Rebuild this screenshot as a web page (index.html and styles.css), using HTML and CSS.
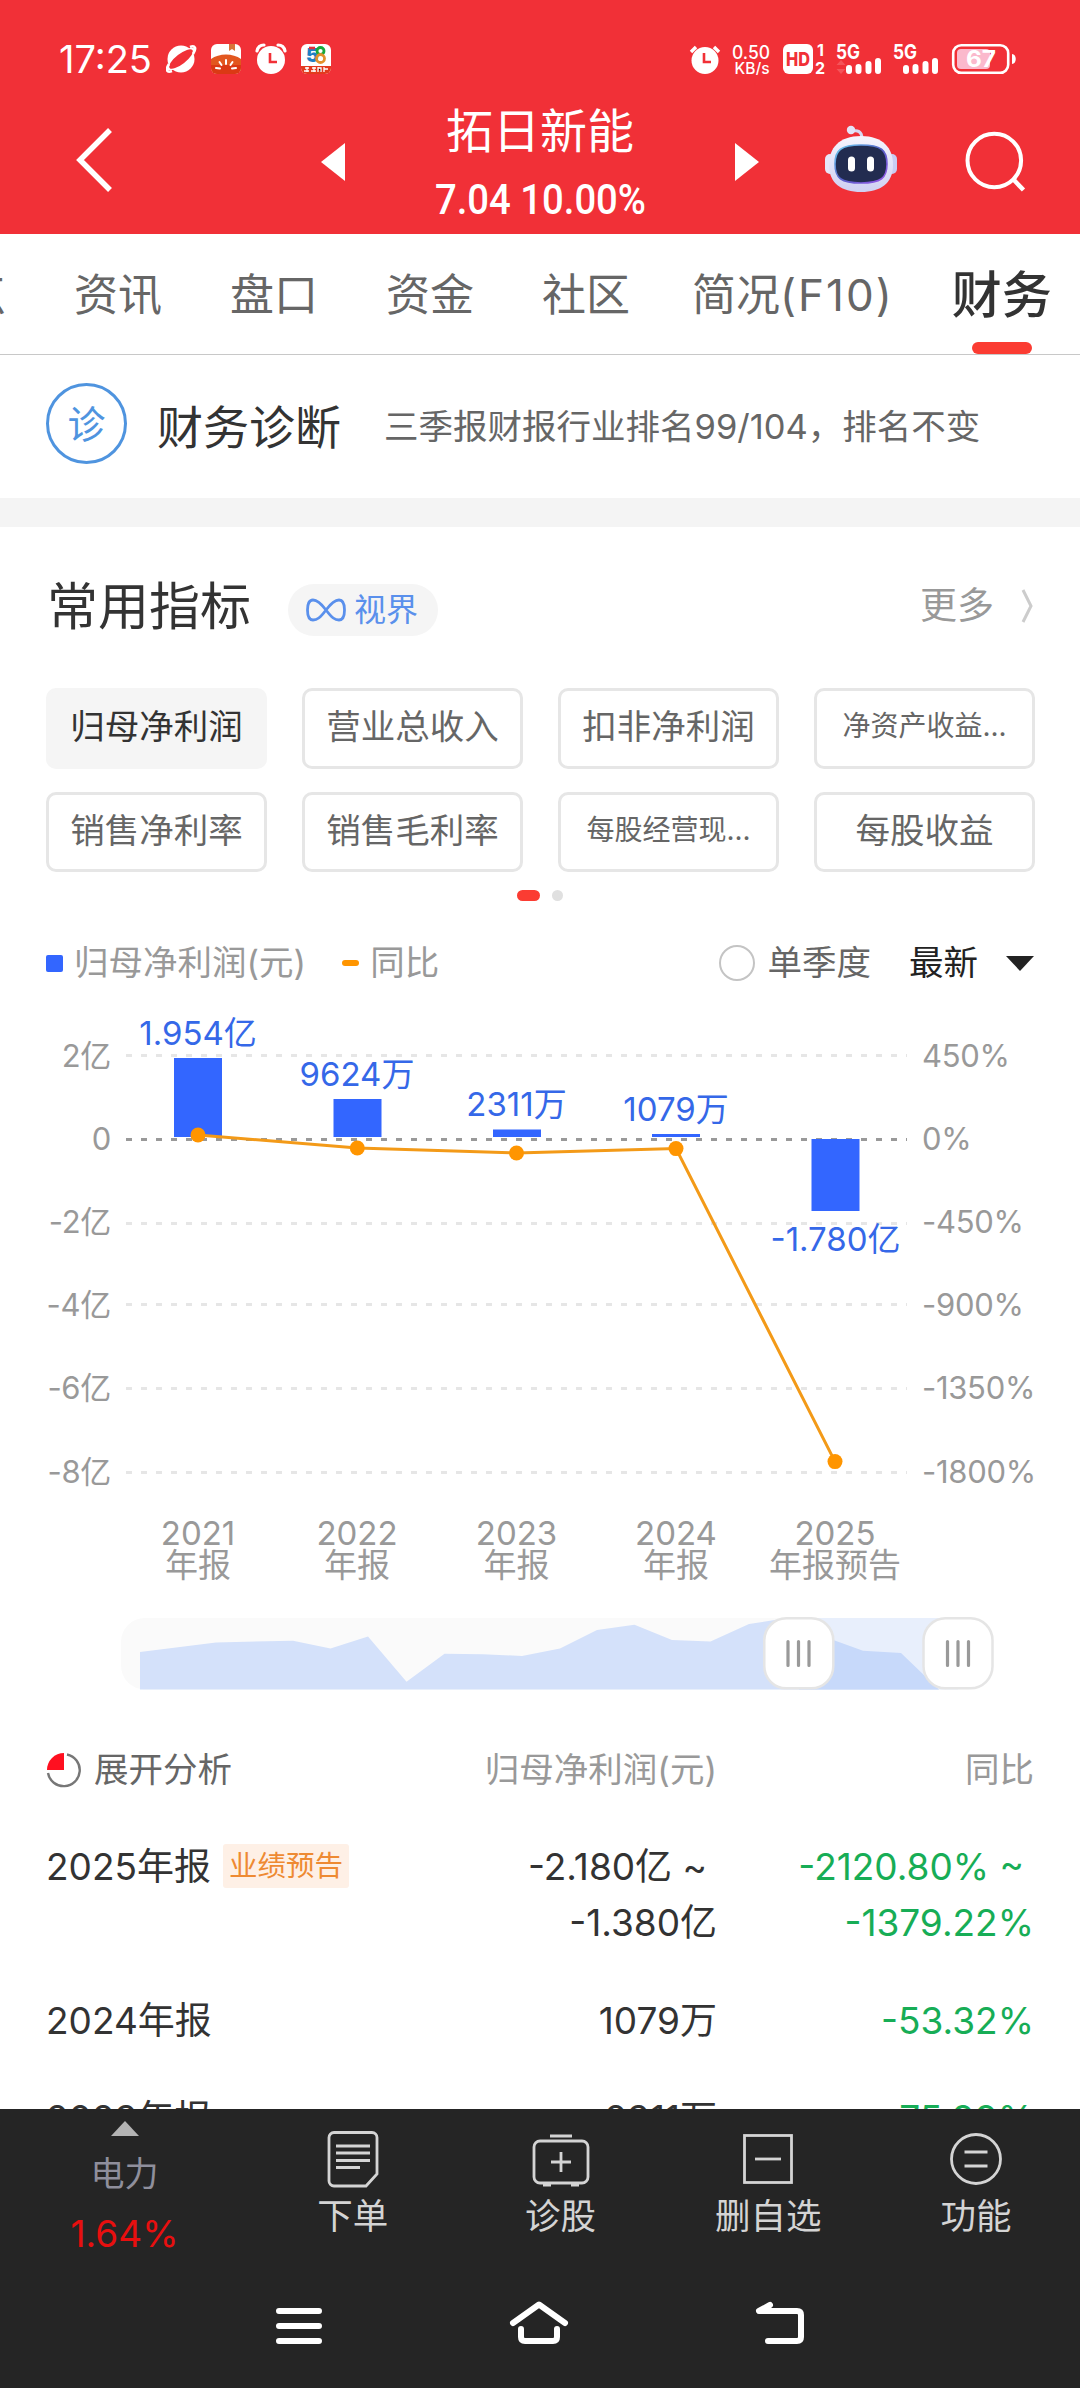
FILE: index.html
```html
<!DOCTYPE html>
<html lang="zh-CN">
<head>
<meta charset="utf-8">
<title>拓日新能 - 财务</title>
<link rel="stylesheet" href="styles.css">
</head>
<body>
<div class="screen">
  <header class="header">
    <div class="status">
      <div class="status-left">
        <span class="clock">17:25</span>
        <svg class="st-icon" width="166" height="32" viewBox="0 0 166 32">
          <circle cx="15" cy="16" r="13.500" fill="#fff"/>
          <ellipse cx="15" cy="16" rx="17" ry="5.500" transform="rotate(-38 15 16)" fill="#fff"/>
          <ellipse cx="15" cy="16" rx="14.500" ry="5" transform="rotate(-38 15 16)" fill="#f13037"/>
          <path d="M24 4c5-2 7 1 3 7M6 28c-5 2-7-1-3-7" fill="none" stroke="#fff" stroke-width="2.600"/>
          <rect x="45" y="1" width="30" height="30" rx="6" fill="#fff"/>
          <path d="M45 16c8-6 22-6 30 0v9a6 6 0 0 1-6 6H51a6 6 0 0 1-6-6z" fill="#e2571f"/>
          <path d="M45 22h30v3a6 6 0 0 1-6 6H51a6 6 0 0 1-6-6z" fill="#d92c10" opacity=".7"/>
          <path d="M63 1h6v7l-3-2-3 2z" fill="#d9743a"/>
          <path d="M60 17v4M53.500 19l2 3M66.500 19l-2 3M50 25l4 .5M70 25l-4 .5" stroke="#fff" stroke-width="2" stroke-linecap="round"/>
          <g transform="translate(90 1)">
            <circle cx="15" cy="16" r="14" fill="#fff"/>
            <path d="M1 7C2 2 5 1 8 1M29 7C28 2 25 1 22 1" fill="none" stroke="#fff" stroke-width="3.200" stroke-linecap="round"/>
            <path d="M14 9v9h7" fill="none" stroke="#f13037" stroke-width="2.600"/>
          </g>
          <rect x="135" y="1" width="30" height="30" rx="6" fill="#fff"/>
          <path d="M135 23h30v2a6 6 0 0 1-6 6h-18a6 6 0 0 1-6-6z" fill="#e23a1e"/>
          <text x="140" y="19" class="s58" fill="#1f7fc4">5</text>
          <path d="M143 5h6" stroke="#e0303a" stroke-width="2.600"/>
          <circle cx="154.500" cy="8" r="3.500" fill="none" stroke="#17a83b" stroke-width="2.800"/>
          <circle cx="154.500" cy="15.500" r="4" fill="none" stroke="#e2912c" stroke-width="2.800"/>
          <path d="M139 25h4M138 28h5M141 24v5M146 25h4M145 28h5M148 24v5M152 24v5M152 25h3v4M158 24v5M158 26h4" stroke="#fff" stroke-width="1.300"/>
        </svg>
      </div>
      <svg class="st-right" width="330" height="32" viewBox="689 43 330 32">
        <circle cx="705" cy="60.500" r="13.500" fill="#fff"/>
        <path d="M691 52l5-5M719 52l-5-5" stroke="#fff" stroke-width="3.400"/>
        <path d="M704 53v9h7" fill="none" stroke="#f13037" stroke-width="2.600"/>
        <text x="732" y="58.500" class="net" textLength="38" lengthAdjust="spacingAndGlyphs">0.50</text>
        <text x="734.500" y="74" class="net2" textLength="35" lengthAdjust="spacingAndGlyphs">KB/s</text>
        <rect x="783" y="44" width="30" height="30" rx="6" fill="#fff"/>
        <text x="786" y="66" class="hd" textLength="24" lengthAdjust="spacingAndGlyphs">HD</text>
        <text x="817" y="56" class="sim">1</text>
        <text x="815" y="74" class="sim">2</text>
        <text x="836" y="59" class="g5" textLength="24" lengthAdjust="spacingAndGlyphs">5G</text>
        <path d="M849 68v3M858.500 67v4M868.500 64v7M878 61v10" stroke="#fff" stroke-width="6" stroke-linecap="round"/>
        <path d="M841 60l4.500 5h-9zM841 74l4.500-5h-9z" fill="#f4545a"/>
        <text x="893" y="59" class="g5" textLength="24" lengthAdjust="spacingAndGlyphs">5G</text>
        <path d="M906 68v3M915.500 67v4M925.500 64v7M935 61v10" stroke="#fff" stroke-width="6" stroke-linecap="round"/>
        <rect x="953.200" y="45.200" width="55" height="27.600" rx="8" fill="none" stroke="#fff" stroke-width="2.600"/>
        <rect x="957" y="49" width="33" height="20" rx="4" fill="#fbb9cc"/>
        <text x="966" y="67" class="batt" textLength="30" lengthAdjust="spacingAndGlyphs">67</text>
        <path d="M1012 54c5 0 5 10 0 10z" fill="#fff"/>
      </svg>
    </div>
    <div class="nav">
      <svg class="back" width="40" height="68" viewBox="0 0 40 68"><path d="M36 4L6 34l30 30" fill="none" stroke="#fff" stroke-width="5.500"/></svg>
      <svg class="prev" width="24" height="38" viewBox="0 0 24 38"><path d="M24 0v38L0 19z" fill="#fff"/></svg>
      <div class="stock">
        <h1 class="stock-name">拓日新能</h1>
        <svg class="stock-quote" width="212" height="36" viewBox="0 0 212 36"><text x="0" y="33" class="quote" textLength="211" lengthAdjust="spacingAndGlyphs">7.04 10.00%</text></svg>
      </div>
      <svg class="next" width="24" height="38" viewBox="0 0 24 38"><path d="M0 0v38l24-19z" fill="#fff"/></svg>
      <svg class="robot" width="74" height="70" viewBox="824 124 74 70">
        <defs>
          <linearGradient id="shell" x1="0" y1="0" x2="0" y2="1"><stop offset="0" stop-color="#f6f5fd"/><stop offset="1" stop-color="#cfd0f2"/></linearGradient>
          <linearGradient id="rim" x1="0" y1="0" x2="1" y2="1"><stop offset="0" stop-color="#6fd3f2"/><stop offset=".5" stop-color="#5560c8"/><stop offset="1" stop-color="#9a55e8"/></linearGradient>
        </defs>
        <path d="M862 139c0-8-5-9-9-8" fill="none" stroke="#d8d8f2" stroke-width="3"/>
        <circle cx="851" cy="130" r="4.200" fill="#e3e3f7"/>
        <rect x="825" y="154" width="10" height="20" rx="5" fill="#e6e6f8"/>
        <rect x="887" y="154" width="10" height="20" rx="5" fill="#c9ccf2"/>
        <path d="M861 136c22 0 32 12 32 29 0 18-12 27-32 27s-32-9-32-27c0-17 10-29 32-29z" fill="url(#shell)"/>
        <path d="M861 145c20 0 26 5 26 19s-6 19-26 19-26-5-26-19 6-19 26-19z" fill="#222c50" stroke="url(#rim)" stroke-width="1.600"/>
        <rect x="848" y="156.500" width="7" height="15" rx="3.500" fill="#fff"/>
        <rect x="867" y="156.500" width="7" height="15" rx="3.500" fill="#fff"/>
      </svg>
      <svg class="search" width="62" height="62" viewBox="964 130 62 62"><circle cx="994.300" cy="160.500" r="26.800" fill="none" stroke="#fff" stroke-width="4"/><path d="M1013 179l10.500 11" stroke="#fff" stroke-width="4.500"/></svg>
    </div>
  </header>

  <nav class="tabs">
    <span class="tab tab-cut">点</span>
    <span class="tab">资讯</span>
    <span class="tab">盘口</span>
    <span class="tab">资金</span>
    <span class="tab">社区</span>
    <span class="tab tab-f10">简况<span class="wide">(F10)</span></span>
    <span class="tab active">财务</span>
  </nav>

  <main class="content">
    <section class="diagnosis">
      <span class="diag-badge">诊</span>
      <span class="diag-title">财务诊断</span>
      <span class="diag-desc">三季报财报行业排名99/104，排名不变</span>
    </section>
    <section class="metrics">
      <div class="metrics-head">
        <h2 class="metrics-title">常用指标</h2>
        <span class="vision">
          <svg width="40" height="24" viewBox="0 0 40 24"><path d="M20 12C14 4 10 2 7 2 3 2 1.500 6 1.500 12S3 22 7 22s7-2 13-10S30 2 33 2c4 0 5.500 4 5.500 10S37 22 33 22s-7-2-13-10z" fill="none" stroke="#5a90ec" stroke-width="2.800"/></svg>
          <span>视界</span>
        </span>
        <span class="more"><span>更多</span><svg width="14" height="38" viewBox="0 0 14 38"><path d="M3 3l8 16-8 16" fill="none" stroke="#ccc" stroke-width="3"/></svg></span>
      </div>
      <div class="chips">
        <span class="chip on">归母净利润</span>
        <span class="chip">营业总收入</span>
        <span class="chip">扣非净利润</span>
        <span class="chip small">净资产收益...</span>
        <span class="chip">销售净利率</span>
        <span class="chip">销售毛利率</span>
        <span class="chip small">每股经营现...</span>
        <span class="chip">每股收益</span>
      </div>
      <div class="pager"><i class="dot current"></i><i class="dot"></i></div>

      <div class="legend">
        <i class="key-bar"></i><span>归母净利润(元)</span>
        <i class="key-line"></i><span>同比</span>
        <i class="radio"></i><span class="quarter">单季度</span>
        <span class="latest">最新</span>
        <svg width="28" height="15" viewBox="0 0 28 15"><path d="M0 0h28L14 15z" fill="#222"/></svg>
      </div>

      <svg class="chart" width="1080" height="607" viewBox="0 993 1080 607">
        <g class="grid">
          <path d="M126 1055.500h781M126 1223.500h781M126 1304.500h781M126 1388.500h781M126 1472.500h781"/>
          <path class="zero" d="M126 1139.500h781"/>
        </g>
        <g class="axis axis-left">
          <text x="111" y="1067">2亿</text><text x="111" y="1150">0</text><text x="111" y="1233">-2亿</text>
          <text x="111" y="1316">-4亿</text><text x="111" y="1399">-6亿</text><text x="111" y="1483">-8亿</text>
        </g>
        <g class="axis">
          <text x="922" y="1067">450%</text><text x="922" y="1150">0%</text><text x="922" y="1233">-450%</text>
          <text x="922" y="1316">-900%</text><text x="922" y="1399">-1350%</text><text x="922" y="1483">-1800%</text>
        </g>
        <g fill="#3366ff">
          <rect x="174" y="1058" width="48" height="79"/><rect x="333.500" y="1099" width="48" height="38"/>
          <rect x="493" y="1129.500" width="48" height="7.500"/><rect x="652" y="1134" width="48" height="3"/>
          <rect x="811.500" y="1139" width="48" height="72"/>
        </g>
        <path d="M198 1135L357.300 1148L516.500 1153L676 1148.600L835 1461.600" fill="none" stroke="#f39a18" stroke-width="3"/>
        <g fill="#ff9500">
          <circle cx="198" cy="1135" r="7.500"/><circle cx="357.300" cy="1148" r="7.500"/><circle cx="516.500" cy="1153" r="7.500"/><circle cx="676" cy="1148.600" r="7.500"/><circle cx="835" cy="1461.600" r="7.500"/>
        </g>
        <g class="value">
          <text x="198" y="1045">1.954亿</text><text x="357" y="1086">9624万</text>
          <text x="516.500" y="1116">2311万</text><text x="676" y="1121">1079万</text>
          <text x="835.500" y="1250.500">-1.780亿</text>
        </g>
        <g class="period">
          <text x="198" y="1545">2021</text><text x="198" y="1577">年报</text>
          <text x="357" y="1545">2022</text><text x="357" y="1577">年报</text>
          <text x="516.500" y="1545">2023</text><text x="516.500" y="1577">年报</text>
          <text x="676" y="1545">2024</text><text x="676" y="1577">年报</text>
          <text x="835" y="1545">2025</text><text x="835" y="1577">年报预告</text>
        </g>
      </svg>

      <svg class="range" width="1080" height="140" viewBox="0 1600 1080 140">
        <defs>
          <clipPath id="win"><rect x="799" y="1618" width="159" height="72"/></clipPath>
          <path id="trend" d="M140 1689.500V1652L216 1642.400L293 1640.800L330.500 1648.500L368 1636.600L406.500 1681.800L444.500 1653.800L483 1654.200L522 1656L560 1648.500L597 1630L634.500 1624.800L672 1640L710.500 1641.600L749 1624L787 1618L825 1637L863 1650.800L901 1653L939 1689.500z"/>
        </defs>
        <rect x="121" y="1618" width="870" height="71.500" rx="24" fill="#fafafa"/>
        <use href="#trend" fill="#d4e1fa"/>
        <g clip-path="url(#win)">
          <rect x="799" y="1618" width="159" height="71.500" fill="#e8effc"/>
          <use href="#trend" fill="#c7d9fa"/>
        </g>
        <g fill="#fff" stroke="#e5e5e5" stroke-width="2.500">
          <rect x="764.300" y="1618.300" width="69" height="70" rx="22"/><rect x="923.500" y="1618.300" width="69" height="70" rx="22"/>
        </g>
        <path d="M788 1641.500v24M798.500 1641.500v24M809 1641.500v24M947.500 1641.500v24M958 1641.500v24M968.500 1641.500v24" stroke="#999" stroke-width="3.200" stroke-linecap="round"/>
      </svg>

      <div class="row thead">
        <div class="c1"><svg width="36" height="36" viewBox="0 0 36 36"><path d="M18 1v17H1A17 17 0 0 1 18 1z" fill="#ff1020"/><path d="M21 2.500A16 16 0 1 1 2 21" fill="none" stroke="#777" stroke-width="2.400"/></svg><span>展开分析</span></div>
        <div class="c2">归母净利润(元)</div>
        <div class="c3">同比</div>
      </div>
      <div class="tbody">
        <div class="row">
          <div class="c1"><span>2025年报</span><span class="tag">业绩预告</span></div>
          <div class="c2"><div class="range-from">-2.180亿 ~</div><div>-1.380亿</div></div>
          <div class="c3 down"><div class="range-from">-2120.80% ~</div><div>-1379.22%</div></div>
        </div>
        <div class="row"><div class="c1">2024年报</div><div class="c2">1079万</div><div class="c3 down">-53.32%</div></div>
        <div class="row"><div class="c1">2023年报</div><div class="c2">2311万</div><div class="c3 down">-75.99%</div></div>
      </div>
    </section>
  </main>

  <footer class="bottom">
    <div class="toolbar">
      <div class="sector">
        <svg width="28" height="15" viewBox="0 0 28 15"><path d="M14 0l14 15H0z" fill="#b3b3b3"/></svg>
        <span class="sector-name">电力</span>
        <span class="sector-rate">1.64%</span>
      </div>
      <div class="tool">
        <svg width="60" height="60" viewBox="0 0 60 60"><g fill="none" stroke="#d4d4d4" stroke-width="2.800"><path d="M11 3.500h38a5 5 0 0 1 5 5V45L43 57H11a5 5 0 0 1-5-5V8.500a5 5 0 0 1 5-5z"/><path d="M13 17h34M13 24h34M13 31.500h34M13 38.500h24"/></g></svg>
        <span>下单</span>
      </div>
      <div class="tool">
        <svg width="60" height="60" viewBox="0 0 60 60"><g fill="none" stroke="#d4d4d4" stroke-width="2.800"><rect x="3" y="12" width="54" height="42" rx="6"/><path d="M19 7h22M12 56h8M40 56h8M20 33h20M30 23v20"/></g></svg>
        <span>诊股</span>
      </div>
      <div class="tool">
        <svg width="60" height="60" viewBox="0 0 60 60"><g fill="none" stroke="#d4d4d4" stroke-width="2.800"><rect x="6.500" y="6.500" width="47" height="47"/><path d="M17 30h26"/></g></svg>
        <span>删自选</span>
      </div>
      <div class="tool">
        <svg width="60" height="60" viewBox="0 0 60 60"><g fill="none" stroke="#d4d4d4" stroke-width="2.800"><circle cx="30" cy="30" r="24.500"/><path d="M18.500 23h23M18.500 37h23"/></g></svg>
        <span>功能</span>
      </div>
    </div>
    <div class="sysnav">
      <svg width="50" height="46" viewBox="275 2300 50 46"><path d="M280 2310h40M280 2325h40M280 2340h40" stroke="#fff" stroke-width="6" stroke-linecap="round"/></svg>
      <svg width="60" height="46" viewBox="510 2300 60 46"><path d="M514 2322l26-18.500 26 18.500M522 2328v8q0 4 4 4h28q4 0 4-4v-8" fill="none" stroke="#fff" stroke-width="6" stroke-linecap="round" stroke-linejoin="round"/></svg>
      <svg width="52" height="46" viewBox="754 2300 52 46"><path d="M770 2304l-11 6h38q4 0 4 4v22q0 4-4 4h-29" fill="none" stroke="#fff" stroke-width="6" stroke-linecap="round" stroke-linejoin="round"/></svg>
    </div>
  </footer>
</div>
</body>
</html>
```
FILE: styles.css
```css
* { box-sizing: border-box; margin: 0; padding: 0; }
body { width: 1080px; height: 2388px; background: #fff; font-family: Inter, "Noto Sans CJK SC", sans-serif; color: #333; }
h1, h2 { font-weight: 400; }
i { display: block; flex: none; }
svg { display: block; flex: none; }
.screen { display: flex; flex-direction: column; height: 2388px; overflow: hidden; }

/* status bar and title bar */
.header { height: 234px; background: #f13037; color: #fff; flex: none; }
.status { display: flex; justify-content: space-between; height: 90px; padding: 43px 61px 0 59px; }
.status-left { display: flex; align-items: flex-start; }
.clock { font-size: 38px; line-height: 32px; width: 107px; letter-spacing: 0; }
.s58 { font: 900 19px Inter; }
.net { font: 500 18px Inter; fill: #fff; }
.net2 { font: 500 16px Inter; fill: #fff; }
.hd { font: 800 19px Inter; fill: #f13037; }
.sim { font: 700 16px Inter; fill: #fff; }
.g5 { font: 700 20px Inter; fill: #fff; }
.batt { font: 700 23px Inter; fill: #fff; }
.nav { display: flex; height: 144px; align-items: flex-start; }
.back { margin: 36px 0 0 74px; }
.prev { margin: 53px 0 0 207px; }
.stock { width: 390px; display: flex; flex-direction: column; align-items: center; padding-top: 16px; }
.stock-name { font-size: 47px; line-height: 50px; }
.stock-quote { margin-top: 25px; margin-left: 2px; }
.quote { font: 500 42px Roboto; fill: #fff; }
.next { margin-top: 53px; }
.robot { margin: 34px 0 0 65px; }
.search { margin: 40px 0 0 66px; }

/* tabs */
.tabs { display: flex; flex: none; height: 121px; border-bottom: 1px solid #c8c8c8; overflow: hidden; font-size: 44px; line-height: 123px; color: #666; white-space: nowrap; }
.tab { margin-right: 68px; flex: none; position: relative; }
.tab-cut { margin-left: -38px; }
.tab-f10 { margin: 0 58px 0 -6px; }
.wide { letter-spacing: 2px; }
.tab.active { font-size: 50px; font-weight: 500; color: #333; margin: 0; }
.tab.active::after { content: ""; position: absolute; left: 20px; bottom: 0; width: 60px; height: 12px; border-radius: 6px; background: #fb3c32; }

.content { flex: 1; min-height: 0; overflow: hidden; }
.diagnosis { display: flex; align-items: center; height: 172px; padding-left: 46px; border-bottom: 29px solid #f4f4f4; line-height: 54px; }
.diag-badge { width: 81px; height: 81px; border: 3px solid #4f94df; border-radius: 50%; color: #4f94df; font-size: 38px; line-height: 77px; text-align: center; margin-top: -7px; }
.diag-title { font-size: 46px; margin-left: 30px; }
.diag-desc { font-size: 34.500px; margin-left: 43px; color: #666; }

/* key metrics */
.metrics-head { display: flex; align-items: flex-start; height: 161px; padding: 57px 46px 0 47px; }
.metrics-title { font-size: 51px; line-height: 46px; }
.vision { display: flex; align-items: center; gap: 8px; width: 150px; height: 52px; border-radius: 26px; background: #f5f5f5; color: #5a90ec; font-size: 32px; line-height: 52px; margin-left: 37px; padding-left: 18px; }
.more { display: flex; align-items: center; gap: 26px; margin-left: auto; font-size: 37px; line-height: 44px; color: #999; }
.chips { display: grid; grid-template-columns: repeat(4, 221px); grid-auto-rows: 80.500px; justify-content: space-between; row-gap: 23px; padding: 0 45px 0 46px; }
.chip { border: 3px solid #e6e6e6; border-radius: 10px; font-size: 34.500px; line-height: 71px; text-align: center; color: #666; white-space: nowrap; }
.chip.small { font-size: 28px; }
.chip.on { background: #f5f5f5; border-color: #f5f5f5; color: #333; }
.pager { display: flex; gap: 12px; margin: 18px 0 0 517px; }
.dot { width: 11px; height: 11px; border-radius: 6px; background: #e0e0e0; }
.dot.current { width: 23px; background: #fb3c32; }

.legend { display: flex; align-items: center; height: 60px; margin: 32px 46px 0; font-size: 34.500px; line-height: 60px; color: #999; }
.key-bar { width: 17px; height: 17px; border-radius: 2px; background: #36f; margin-right: 11px; }
.key-line { width: 17px; height: 6px; border-radius: 3px; background: #ff9500; margin: 0 11px 0 36px; }
.radio { width: 36px; height: 36px; border: 2px solid #c4c4c4; border-radius: 50%; margin-left: auto; margin-right: 13px; }
.quarter { color: #666; }
.latest { color: #222; margin: 0 28px 0 38px; }

/* chart */
.grid { stroke: #e6e6e6; stroke-width: 3; stroke-dasharray: 6 9; fill: none; }
.grid .zero { stroke: #999; }
.axis { font-size: 31px; fill: #999; letter-spacing: -0.3px; }
.axis-left { text-anchor: end; }
.value { font-size: 33px; fill: #3568e8; text-anchor: middle; }
.period { font-size: 33px; fill: #999; text-anchor: middle; }

/* table */
.row { display: grid; grid-template-columns: 350px 1fr 317px; padding: 21px 46px; font-size: 37px; line-height: 56px; color: #333; }
.c1 { display: flex; align-items: flex-start; }
.c2, .c3 { text-align: right; }
.thead { height: 60px; padding: 0 46px; font-size: 34.500px; line-height: 60px; color: #999; }
.thead .c1 { color: #666; align-items: center; gap: 12px; }
.tbody { margin-top: 18px; }
.down { color: #17ad56; }
.range-from { margin-right: 10px; }
.tag { height: 44px; margin: 5px 0 0 12px; padding: 0 6px; border-radius: 3px; background: #fef0e6; color: #ee8a33; font-size: 28.500px; line-height: 43px; }

/* bottom toolbar and system navigation */
.bottom { flex: none; height: 279px; background: #252525; color: #d4d4d4; }
.toolbar { display: grid; grid-template-columns: 249px repeat(4, 207.700px); height: 171px; }
.sector, .tool { display: flex; flex-direction: column; align-items: center; }
.sector svg { margin-top: 12px; }
.sector-name { margin-top: 15px; font-size: 34px; line-height: 46px; color: #8f8f9c; }
.sector-rate { margin-top: 12px; font-size: 37px; line-height: 50px; color: #e80f0f; }
.tool svg { margin-top: 20px; }
.tool span { font-size: 35.500px; line-height: 46px; margin-top: 5px; }
.sysnav { display: flex; justify-content: center; padding-top: 21px; gap: 185px; }
```
